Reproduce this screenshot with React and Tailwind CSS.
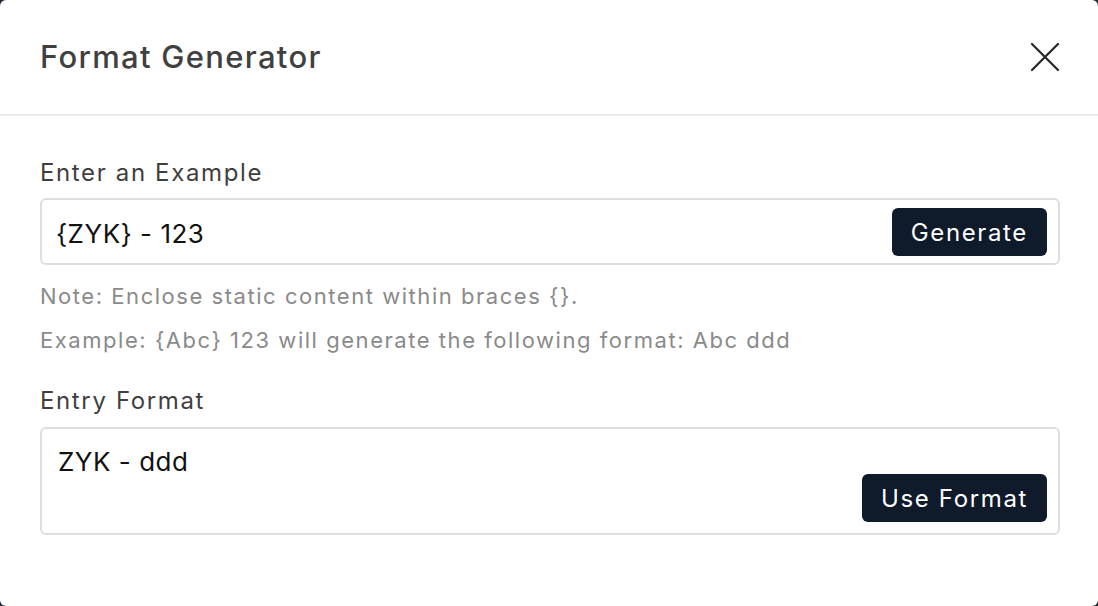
import { useState } from 'react'

function CloseIcon() {
  return (
    <svg width="30" height="30" viewBox="0 0 30 30" fill="none" stroke="#262626" strokeWidth="2.2" strokeLinecap="round">
      <path d="M2 2L28 28M28 2L2 28" />
    </svg>
  )
}

export default function App() {
  const [example, setExample] = useState('{ZYK} - 123')
  const [format] = useState('ZYK - ddd')

  return (
    <div className="h-screen w-full bg-[#1f2937]" style={{ fontFamily: 'Inter, "Noto Sans", sans-serif' }}>
      <div className="h-full rounded-[6px] bg-white flex flex-col">
        {/* Header */}
        <div className="h-[116px] flex items-center justify-between pl-10 pr-[38px] border-b-2 border-[#ebebeb]">
          <h1 className="text-[31px] font-medium tracking-[0.042em] text-[#404040] leading-[40px]">Format Generator</h1>
          <button className="p-0" title="Close">
            <CloseIcon />
          </button>
        </div>

        {/* Body */}
        <div className="pl-10 pr-[38px] pt-[41px]">
          <label className="block text-[24px] leading-[32px] tracking-[0.068em] text-[#3f3f3f]">Enter an Example</label>
          <div className="mt-[9px] h-[67px] flex items-center border-2 border-[#dedede] rounded-[6px] pl-[14px] pr-[11px]">
            <input
              value={example}
              onChange={(e) => setExample(e.target.value)}
              className="flex-1 min-w-0 outline-none text-[26px] tracking-[0.02em] text-[#111] bg-transparent mt-[3px]"
            />
            <button className="h-[48px] px-[19px] pt-[2px] rounded-[6px] bg-[#0f1a2b] text-white text-[24px] tracking-[0.068em] leading-none">
              Generate
            </button>
          </div>

          <p className="mt-4 text-[22px] leading-[30px] tracking-[0.07em] text-[#8a8a8a]">Note: Enclose static content within braces {'{}'}.</p>
          <p className="mt-[14px] text-[22px] leading-[30px] tracking-[0.07em] text-[#8a8a8a]">
            Example: {'{Abc}'} 123 will generate the following format: Abc ddd
          </p>

          <label className="block mt-[30px] text-[24px] leading-[32px] tracking-[0.068em] text-[#3f3f3f]">Entry Format</label>
          <div className="mt-[10px] h-[108px] flex justify-between border-2 border-[#dedede] rounded-[6px] pl-4 pr-[11px] pt-[17px] pb-[11px]">
            <span className="text-[26px] leading-[32px] tracking-[0.02em] text-[#111]">{format}</span>
            <button className="self-end h-[48px] px-[19px] pt-[2px] rounded-[6px] bg-[#0f1a2b] text-white text-[24px] tracking-[0.068em] leading-none">
              Use Format
            </button>
          </div>
        </div>
      </div>
    </div>
  )
}
